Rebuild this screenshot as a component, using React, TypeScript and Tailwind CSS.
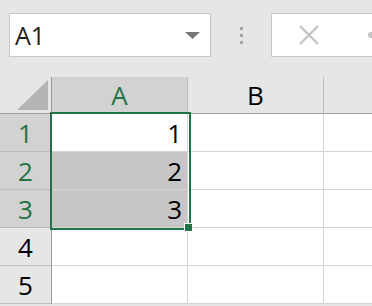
const green = "border-[#217346]";

const RowHead = ({ n, sel }: { n: number; sel: boolean }) => (
  <div
    className={`flex items-center justify-center border-r border-b ${
      sel
        ? "bg-[#d2d2d2] text-[#217346] border-r-[#9b9b9b] border-b-[#bdbdbd]"
        : "bg-[#e6e6e6] text-black border-r-[#9b9b9b] border-b-[#bdbdbd]"
    }`}
  >
    {n}
  </div>
);

const Cell = ({ v, shade }: { v?: string; shade?: boolean }) => (
  <div
    className={`flex items-center justify-end pr-[5px] border-r border-b border-[#d4d4d4] ${
      shade ? "bg-[#c6c6c6]" : "bg-white"
    }`}
  >
    {v}
  </div>
);

export default function App() {
  const rows = [1, 2, 3, 4, 5];
  return (
    <div
      className="w-[372px] h-[306px] overflow-hidden bg-[#e6e6e6] text-[26px] leading-none"
      style={{ fontFamily: '"Open Sans", "Noto Sans", sans-serif' }}
    >
      <div className="h-[77px] flex items-start pt-[13px] pl-[9px]">
        <div className="shrink-0 w-[202px] h-[44px] bg-white border border-[#c6c6c6] flex items-center justify-between pl-[5px] pr-[10px]">
          <span className="text-[25px] text-[#222]">A1</span>
          <svg width="15" height="7" viewBox="0 0 15 7">
            <polygon points="0,0 15,0 7.5,7" fill="#777" />
          </svg>
        </div>
        <div className="shrink-0 w-[60px] h-[44px] flex flex-col items-center justify-center gap-[4px]">
          <div className="w-[3px] h-[3px] bg-[#a6a6a6]" />
          <div className="w-[3px] h-[3px] bg-[#a6a6a6]" />
          <div className="w-[3px] h-[3px] bg-[#a6a6a6]" />
        </div>
        <div className="flex-1 min-w-0 h-[44px] bg-white border border-[#c6c6c6] border-r-0 flex items-center pl-[26px] gap-[48px] overflow-hidden">
          <svg className="shrink-0" width="22" height="20" viewBox="0 0 22 20">
            <path d="M2 1 L20 19 M20 1 L2 19" stroke="#c4c4c4" strokeWidth="2.4" />
          </svg>
          <div className="shrink-0 w-[6px] h-[6px] rounded-full bg-[#c4c4c4]" />
        </div>
      </div>

      <div className="relative grid grid-cols-[52px_136px_136px_1fr] grid-rows-[37px_repeat(5,38px)]">
        <div className="relative bg-[#e6e6e6] border-r border-b border-r-[#9b9b9b] border-b-[#9b9b9b]">
          <svg className="absolute right-[3px] bottom-[3px]" width="31" height="30" viewBox="0 0 31 30">
            <polygon points="31,0 31,30 0,30" fill="#b4b4b4" />
          </svg>
        </div>
        <div className="flex items-center justify-center bg-[#d2d2d2] text-[#217346] border-r border-b border-r-[#bdbdbd] border-b-[#9b9b9b]">
          A
        </div>
        <div className="flex items-center justify-center bg-[#e6e6e6] text-black border-r border-b border-r-[#bdbdbd] border-b-[#9b9b9b]">
          B
        </div>
        <div className="bg-[#e6e6e6] border-b border-b-[#9b9b9b]" />

        {rows.map((r) => (
          <>
            <RowHead key={`h${r}`} n={r} sel={r <= 3} />
            <Cell key={`a${r}`} v={r <= 3 ? String(r) : undefined} shade={r === 2 || r === 3} />
            <Cell key={`b${r}`} />
            <div key={`c${r}`} className="bg-white border-b border-[#d4d4d4]" />
          </>
        ))}

        <div className={`absolute left-[50px] top-[35px] w-[141px] h-[118px] border-[2.5px] ${green}`}>
          <div className="absolute right-[-4px] bottom-[-4px] w-[9px] h-[9px] bg-[#217346] border border-white" />
        </div>
      </div>
    </div>
  );
}
